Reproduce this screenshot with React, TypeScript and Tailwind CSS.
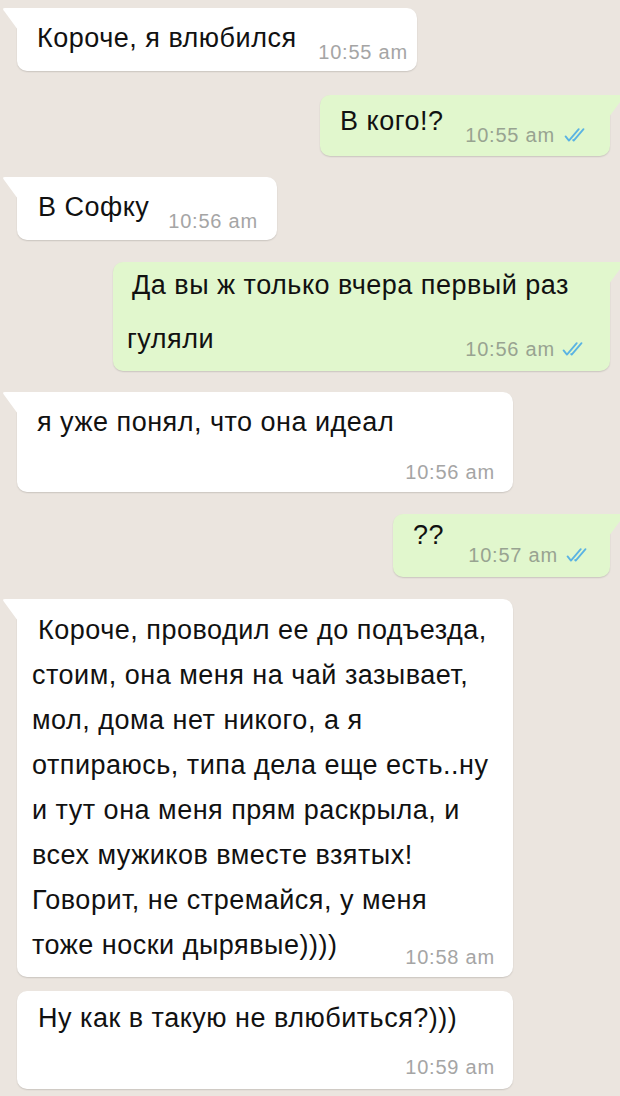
import React from "react";

const FONT = { fontFamily: '"Liberation Sans", Arial, sans-serif' };

function Checks() {
  return (
    <svg width="27" height="14" viewBox="0 0 18 10" fill="none" className="shrink-0">
      <polyline points="1.2,6 3.6,9 10.6,0.8" stroke="#5ab3e3" strokeWidth="1.3" strokeLinecap="round" strokeLinejoin="round" />
      <polyline points="6.6,8.6 7,9 14,0.8" stroke="#5ab3e3" strokeWidth="1.3" strokeLinecap="round" strokeLinejoin="round" />
    </svg>
  );
}

function TailIn() {
  return (
    <svg width="16" height="22" viewBox="0 0 16 22" className="absolute left-[-15px] top-0">
      <path d="M16 0 L3 0 Q0 0 1.6 2.2 L16 22 Z" fill="#ffffff" />
    </svg>
  );
}

function TailOut() {
  return (
    <svg width="16" height="22" viewBox="0 0 16 22" className="absolute right-[-15px] top-0">
      <path d="M0 0 L13 0 Q16 0 14.4 2.2 L0 22 Z" fill="#e1f7cd" />
    </svg>
  );
}

const inBubble =
  "relative bg-white rounded-[10px] shadow-[0_1px_1.5px_rgba(0,0,0,0.14)] text-[#111111] text-[27px] leading-[30px] tracking-[0.5px] self-start ml-[17px]";
const outBubble =
  "relative bg-[#e1f7cd] rounded-[10px] shadow-[0_1px_1.5px_rgba(0,0,0,0.14)] text-[#111111] text-[27px] leading-[30px] tracking-[0.5px] self-end mr-[10px]";
const timeIn = "text-[20px] leading-[22px] tracking-[0.8px] text-[#a5a5a5] whitespace-nowrap";
const timeOut = "text-[20px] leading-[22px] tracking-[0.8px] text-[#98a391] whitespace-nowrap";

export default function App() {
  return (
    <div className="w-[620px] h-[1096px] overflow-hidden bg-[#ebe5df] flex flex-col pt-[8px]" style={FONT}>
      {/* 1 */}
      <div className={`${inBubble} w-[400px] rounded-tl-none flex pl-[20px] pr-[9px] pt-[15px] pb-[8px]`}>
        <TailIn />
        <div className="whitespace-nowrap">Короче, я влюбился</div>
        <div className={`${timeIn} ml-auto mt-[18px]`}>10:55 am</div>
      </div>

      {/* 2 */}
      <div className={`${outBubble} mt-[24px] w-[290px] rounded-tr-none flex pl-[20px] pr-[20px] pt-[11px] pb-[10px]`}>
        <TailOut />
        <div className="whitespace-nowrap">В кого!?</div>
        <div className="ml-auto mt-[18px] flex items-center gap-[8px]">
          <span className={timeOut}>10:55 am</span>
          <Checks />
        </div>
      </div>

      {/* 3 */}
      <div className={`${inBubble} mt-[21px] w-[260px] rounded-tl-none flex pl-[21px] pr-[19px] pt-[15px] pb-[8px]`}>
        <TailIn />
        <div className="whitespace-nowrap">В Софку</div>
        <div className={`${timeIn} ml-auto mt-[18px]`}>10:56 am</div>
      </div>

      {/* 4 */}
      <div className={`${outBubble} mt-[22px] w-[497px] rounded-tr-none pl-[14px] pr-[22px] pt-[8px] pb-[11px]`}>
        <TailOut />
        <div className="whitespace-nowrap pl-[5px]">Да вы ж только вчера первый раз</div>
        <div className="flex mt-[24px]">
          <div className="whitespace-nowrap">гуляли</div>
          <div className="ml-auto mt-[14px] flex items-center gap-[6px]">
            <span className={timeOut}>10:56 am</span>
            <Checks />
          </div>
        </div>
      </div>

      {/* 5 */}
      <div className={`${inBubble} mt-[21px] w-[496px] rounded-tl-none pl-[20px] pr-[18px] pt-[15px] pb-[9px]`}>
        <TailIn />
        <div className="whitespace-nowrap">я уже понял, что она идеал</div>
        <div className="flex justify-end mt-[24px]">
          <span className={timeIn}>10:56 am</span>
        </div>
      </div>

      {/* 6 */}
      <div className={`${outBubble} mt-[22px] w-[217px] rounded-tr-none flex pl-[20px] pr-[18px] pt-[6px] pb-[11px]`}>
        <TailOut />
        <div className="whitespace-nowrap">??</div>
        <div className="ml-auto mt-[24px] flex items-center gap-[7px]">
          <span className={timeOut}>10:57 am</span>
          <Checks />
        </div>
      </div>

      {/* 7 */}
      <div className={`${inBubble} mt-[22px] w-[496px] rounded-tl-none pl-[15px] pr-[18px] pt-[9px] pb-[9px] leading-[45px]`}>
        <TailIn />
        <div className="whitespace-nowrap pl-[6px]">Короче, проводил ее до подъезда,</div>
        <div className="whitespace-nowrap">стоим, она меня на чай зазывает,</div>
        <div className="whitespace-nowrap">мол, дома нет никого, а я</div>
        <div className="whitespace-nowrap">отпираюсь, типа дела еще есть..ну</div>
        <div className="whitespace-nowrap">и тут она меня прям раскрыла, и</div>
        <div className="whitespace-nowrap">всех мужиков вместе взятых!</div>
        <div className="whitespace-nowrap">Говорит, не стремайся, у меня</div>
        <div className="flex">
          <div className="whitespace-nowrap">тоже носки дырявые))))</div>
          <div className={`${timeIn} ml-auto mt-[23px]`}>10:58 am</div>
        </div>
      </div>

      {/* 8 */}
      <div className={`${inBubble} mt-[14px] w-[496px] pl-[21px] pr-[18px] pt-[12px] pb-[11px]`}>
        <div className="whitespace-nowrap">Ну как в такую не влюбиться?)))</div>
        <div className="flex justify-end mt-[23px]">
          <span className={timeIn}>10:59 am</span>
        </div>
      </div>
    </div>
  );
}
